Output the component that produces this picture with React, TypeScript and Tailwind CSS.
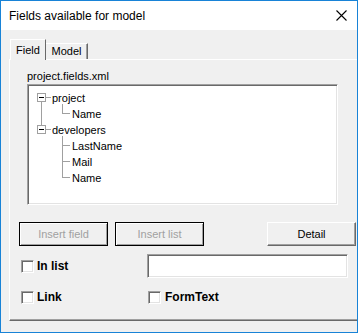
import React from "react"

const sunken =
  "border border-t-[#a0a0a0] border-l-[#a0a0a0] border-b-white border-r-white shadow-[inset_1px_1px_0_#696969,inset_-1px_-1px_0_#e3e3e3]"

const Checkbox = () => <div className={`w-[13px] h-[13px] bg-white shrink-0 ${sunken}`} />

const DialogButton = ({ label, disabled }: { label: string; disabled?: boolean }) => (
  <div
    className={
      disabled
        ? "w-[89px] h-[24px] flex items-center justify-center border border-black bg-[#f0f0f0] shadow-[inset_1px_1px_0_#fff,inset_-1px_-1px_0_#a0a0a0] text-[#a0a0a0]"
        : "w-[89px] h-[24px] flex items-center justify-center border border-t-white border-l-white border-b-[#696969] border-r-[#696969] bg-[#f0f0f0] shadow-[inset_-1px_-1px_0_#a0a0a0] text-black"
    }
  >
    {label}
  </div>
)

const treeRows = [
  { label: "project", indent: "pl-[24px]" },
  { label: "Name", indent: "pl-[44px]" },
  { label: "developers", indent: "pl-[24px]" },
  { label: "LastName", indent: "pl-[44px]" },
  { label: "Mail", indent: "pl-[44px]" },
  { label: "Name", indent: "pl-[44px]" },
]

const TreeLines = () => (
  <svg className="absolute inset-0 pointer-events-none" width="309" height="117" shapeRendering="crispEdges">
    <g stroke="#a0a0a0" strokeWidth="1" fill="none">
      {/* project */}
      <rect x="9.5" y="8.5" width="8" height="8" fill="#fff" />
      <line x1="18" y1="12.5" x2="23" y2="12.5" />
      <line x1="13.5" y1="17" x2="13.5" y2="40" />
      <line x1="34.5" y1="19" x2="34.5" y2="29" />
      <line x1="35" y1="28.5" x2="42" y2="28.5" />
      {/* developers */}
      <rect x="9.5" y="40.5" width="8" height="8" fill="#fff" />
      <line x1="18" y1="44.5" x2="23" y2="44.5" />
      <line x1="34.5" y1="51" x2="34.5" y2="93" />
      <line x1="35" y1="60.5" x2="42" y2="60.5" />
      <line x1="35" y1="76.5" x2="42" y2="76.5" />
      <line x1="35" y1="92.5" x2="42" y2="92.5" />
    </g>
    <g stroke="#000" strokeWidth="1">
      <line x1="11" y1="12.5" x2="16" y2="12.5" />
      <line x1="11" y1="44.5" x2="16" y2="44.5" />
    </g>
  </svg>
)

export default function App() {
  return (
    <div className="w-[359px] h-[334px] bg-white font-['Liberation_Sans',Arial,sans-serif] text-[11px] text-black">
      <div className="w-[358px] h-[333px] border border-[#1883d7] bg-[#f0f0f0] flex flex-col overflow-hidden">
        {/* title bar */}
        <div className="h-[29px] bg-white flex items-center justify-between pl-[8px] pr-[10px] shrink-0">
          <span className="text-[12px]">Fields available for model</span>
          <svg width="11" height="11" viewBox="0 0 11 11">
            <path d="M0.5 0.5 L10.5 10.5 M10.5 0.5 L0.5 10.5" stroke="#000" strokeWidth="1.1" />
          </svg>
        </div>

        {/* tabs */}
        <div className="mt-[9px] ml-[9px] h-[20px] flex items-end">
          <div className="relative top-px z-10 w-[36px] h-[21px] flex items-center justify-center bg-[#f0f0f0] border-l border-t border-r border-l-white border-t-white border-r-[#696969]">
            Field
          </div>
          <div className="w-[42px] h-[16px] flex items-center justify-center border-t border-r border-t-white border-r-[#696969] shadow-[inset_-1px_0_0_#a0a0a0]">
            Model
          </div>
        </div>

        {/* panel */}
        <div className="ml-[8px] h-[262px] border-l border-t border-b border-l-white border-t-white border-b-[#696969] shadow-[inset_0_-1px_0_#a0a0a0] flex flex-col">
          <div className="mt-[9px] ml-[17px] h-[14px] leading-[14px]">project.fields.xml</div>

          <div className={`relative mt-[1px] ml-[17px] w-[311px] h-[121px] bg-white pt-[5px] ${sunken}`}>
            <TreeLines />
            {treeRows.map((row, i) => (
              <div key={i} className={`relative h-[16px] leading-[16px] ${row.indent}`}>
                {row.label}
              </div>
            ))}
          </div>

          {/* buttons */}
          <div className="mt-[17px] ml-[9px] flex">
            <DialogButton label="Insert field" disabled />
            <div className="ml-[7px]">
              <DialogButton label="Insert list" disabled />
            </div>
            <div className="ml-[63px]">
              <DialogButton label="Detail" />
            </div>
          </div>

          {/* options */}
          <div className="mt-[8px] ml-[11px] h-[24px] flex items-center">
            <div className="w-[126px] flex items-center gap-[3px]">
              <Checkbox />
              <span className="font-bold text-[12px]">In list</span>
            </div>
            <div className={`w-[201px] h-[24px] bg-white ${sunken}`} />
          </div>
          <div className="mt-[11px] ml-[11px] h-[16px] flex items-center">
            <div className="w-[127px] flex items-center gap-[3px]">
              <Checkbox />
              <span className="font-bold text-[12px]">Link</span>
            </div>
            <div className="flex items-center gap-[4px]">
              <Checkbox />
              <span className="font-bold text-[12px]">FormText</span>
            </div>
          </div>
        </div>
      </div>
    </div>
  )
}
